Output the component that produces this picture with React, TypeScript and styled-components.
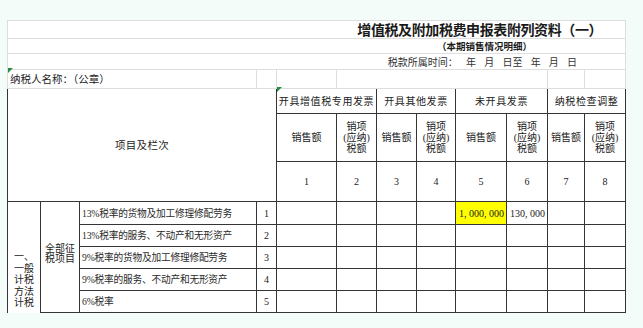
import React from 'react'
import styled, { createGlobalStyle, css } from 'styled-components'

const GlobalStyle = createGlobalStyle`
  html, body {
    margin: 0;
    padding: 0;
    background: #f4fcfa;
  }
  body {
    font-family: "Liberation Serif", "Noto Sans CJK SC", serif;
    color: #222;
  }
`

const Page = styled.div`
  padding: 20px 0 0 7px;
`

const Sheet = styled.table`
  border-collapse: collapse;
  table-layout: fixed;
  width: 619px;
  background: #fff;
  font-size: 10px;
`

const Row = styled.tr<{ $h: number }>`
  height: ${(p) => p.$h}px;
`

type Tone = 'light' | 'dark'

const Cell = styled.td<{
  $tone?: Tone
  $align?: 'left' | 'center' | 'right'
  $valign?: 'top' | 'middle' | 'bottom'
  $pad?: string
  $fill?: string
  $flag?: boolean
  $open?: boolean
}>`
  position: relative;
  padding: ${(p) => p.$pad || '0'};
  text-align: ${(p) => p.$align || 'center'};
  vertical-align: ${(p) => p.$valign || 'middle'};
  background: ${(p) => p.$fill || 'transparent'};
  line-height: 11px;
  white-space: nowrap;
  overflow: hidden;
  ${(p) =>
    p.$tone === 'dark'
      ? css`
          border: 1px solid #353535;
        `
      : css`
          border: 1px solid #dedede;
        `}
  ${(p) =>
    p.$open &&
    css`
      border-bottom: none;
    `}
  ${(p) =>
    p.$flag &&
    css`
      overflow: visible;
      &::before {
        content: '';
        position: absolute;
        left: 0;
        top: -2px;
        border-top: 5px solid #1f8f3c;
        border-right: 5px solid transparent;
      }
    `}
`

const Title = styled.div`
  font-family: "Noto Sans CJK SC", sans-serif;
  font-size: 14px;
  font-weight: 700;
  color: #1a1a1a;
  text-align: right;
  padding-right: 23px;
  letter-spacing: -0.4px;
`

const SubTitle = styled.div`
  font-family: "Noto Sans CJK SC", sans-serif;
  font-size: 9.5px;
  font-weight: 700;
  color: #1a1a1a;
  text-align: right;
  padding-right: 93px;
`

const Period = styled.div`
  font-family: "Noto Sans CJK SC", sans-serif;
  font-size: 10px;
  color: #333;
  text-align: right;
  padding-right: 48px;
  word-spacing: 6px;
`

const Label = styled.span<{ $size?: number; $space?: number }>`
  font-size: ${(p) => p.$size || 10}px;
  letter-spacing: ${(p) => p.$space || 0}px;
`

const Stack = styled.div<{ $lh?: number }>`
  display: flex;
  flex-direction: column;
  align-items: center;
  line-height: ${(p) => p.$lh || 11}px;
`

const Item = styled.span`
  font-size: 9.7px;
  letter-spacing: -0.2px;
  color: #2a2a2a;
`

const Amount = styled.span`
  font-family: "Liberation Serif", serif;
  font-size: 10px;
  color: #222;
`

const widths = [33, 39, 177, 20, 60, 40, 40, 39, 51, 41, 37, 41]

const groups = ['开具增值税专用发票', '开具其他发票', '未开具发票', '纳税检查调整']

const items = [
  '13%税率的货物及加工修理修配劳务',
  '13%税率的服务、不动产和无形资产',
  '9%税率的货物及加工修理修配劳务',
  '9%税率的服务、不动产和无形资产',
  '6%税率',
]

const values: Record<number, Record<number, { text: string; fill?: string }>> = {
  0: {
    4: { text: '1, 000, 000', fill: '#ffff00' },
    5: { text: '130, 000' },
  },
}

const TaxDetail: React.FC = () => {
  return (
    <Sheet>
      <colgroup>
        {widths.map((w, i) => (
          <col key={i} style={{ width: w }} />
        ))}
      </colgroup>
      <tbody>
        <Row $h={18}>
          <Cell colSpan={12} $align="right">
            <Title>增值税及附加税费申报表附列资料（一）</Title>
          </Cell>
        </Row>
        <Row $h={15}>
          <Cell colSpan={12}>
            <SubTitle>（本期销售情况明细）</SubTitle>
          </Cell>
        </Row>
        <Row $h={16}>
          <Cell colSpan={12}>
            <Period>税款所属时间： 年 月 日至 年 月 日</Period>
          </Cell>
        </Row>
        <Row $h={19}>
          <Cell colSpan={3} $align="left" $pad="0 0 0 2px" $flag>
            <Label $size={10.5}>纳税人名称：（公章）</Label>
          </Cell>
          <Cell />
          <Cell />
          <Cell colSpan={5} />
          <Cell />
          <Cell />
        </Row>

        <Row $h={25}>
          <Cell $tone="dark" colSpan={4} rowSpan={3}>
            <Label $size={10.5} $space={0.3}>项目及栏次</Label>
          </Cell>
          {groups.map((g, i) => (
            <Cell key={g} $tone="dark" colSpan={2} $flag={i === 0}>
              <Label $size={10} $space={0.6}>{g}</Label>
            </Cell>
          ))}
        </Row>
        <Row $h={48}>
          {groups.map((g) => (
            <React.Fragment key={g}>
              <Cell $tone="dark">
                <Label>销售额</Label>
              </Cell>
              <Cell $tone="dark">
                <Stack>
                  <span>销项</span>
                  <span>(应纳)</span>
                  <span>税额</span>
                </Stack>
              </Cell>
            </React.Fragment>
          ))}
        </Row>
        <Row $h={40}>
          {[1, 2, 3, 4, 5, 6, 7, 8].map((n) => (
            <Cell key={n} $tone="dark">
              <Amount>{n}</Amount>
            </Cell>
          ))}
        </Row>

        {items.map((text, r) => (
          <Row key={text} $h={r === 0 ? 23 : 22}>
            {r === 0 && (
              <>
                <Cell $tone="dark" rowSpan={5} $valign="bottom" $pad="0 0 4px 0" $open>
                  <Stack $lh={11.5}>
                    <span>一、</span>
                    <span>一般</span>
                    <span>计税</span>
                    <span>方法</span>
                    <span>计税</span>
                  </Stack>
                </Cell>
                <Cell $tone="dark" rowSpan={5} $pad="0 0 7px 0">
                  <Stack $lh={9.5}>
                    <span>全部征</span>
                    <span>税项目</span>
                  </Stack>
                </Cell>
              </>
            )}
            <Cell $tone="dark" $align="left" $pad="0 0 0 2px">
              <Item>{text}</Item>
            </Cell>
            <Cell $tone="dark">
              <Amount>{r + 1}</Amount>
            </Cell>
            {[0, 1, 2, 3, 4, 5, 6, 7].map((c) => {
              const v = values[r]?.[c]
              return (
                <Cell key={c} $tone="dark" $align="left" $pad="0 0 0 3px" $fill={v?.fill}>
                  {v && <Amount>{v.text}</Amount>}
                </Cell>
              )
            })}
          </Row>
        ))}
      </tbody>
    </Sheet>
  )
}

export default function App() {
  return (
    <>
      <GlobalStyle />
      <Page>
        <TaxDetail />
      </Page>
    </>
  )
}
